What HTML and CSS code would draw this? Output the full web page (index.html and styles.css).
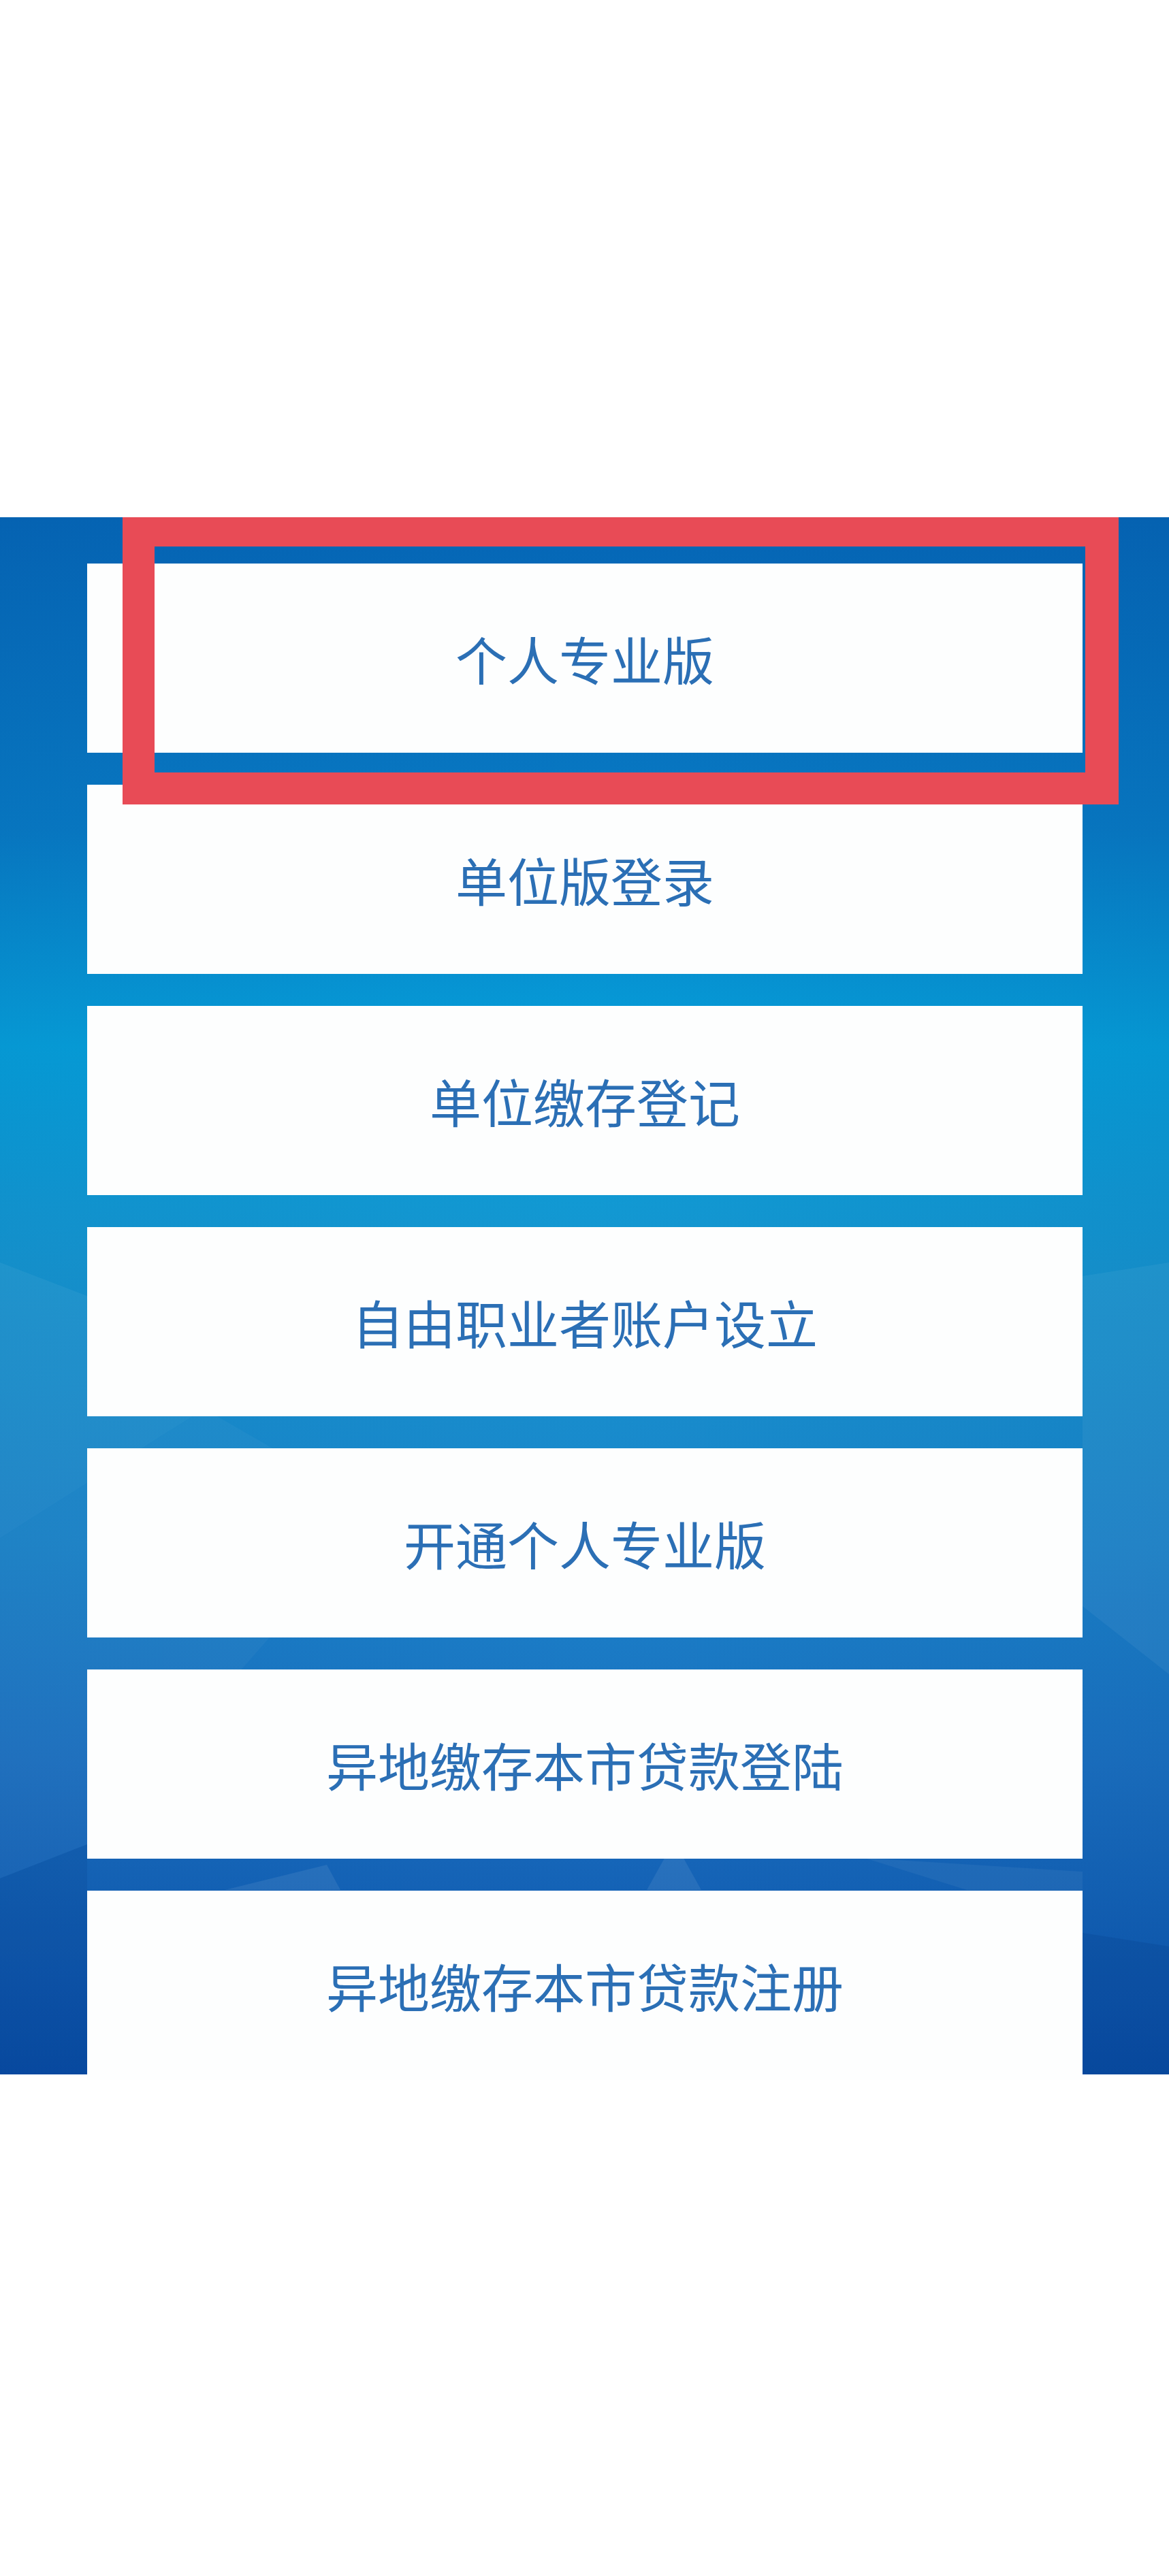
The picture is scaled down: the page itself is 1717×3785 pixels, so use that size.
FILE: index.html
```html
<!DOCTYPE html>
<html lang="zh-CN">
<head>
<meta charset="utf-8">
<title>登录方式</title>
<link rel="stylesheet" href="styles.css">
</head>
<body>
<div class="top-space"></div>
<section class="panel">
  <svg class="panel-bg" viewBox="0 0 1717 2288" preserveAspectRatio="none" aria-hidden="true">
    <defs>
      <linearGradient id="bgv" x1="0" y1="0" x2="0" y2="1">
        <stop offset="0" stop-color="#0566b6"/>
        <stop offset="0.2" stop-color="#087ac4"/>
        <stop offset="0.34" stop-color="#06a0da"/>
        <stop offset="0.48" stop-color="#1696d0"/>
        <stop offset="0.66" stop-color="#1a84ca"/>
        <stop offset="0.8" stop-color="#1b70c0"/>
        <stop offset="1" stop-color="#0a4fa8"/>
      </linearGradient>
      <linearGradient id="bgh" x1="0" y1="0" x2="1" y2="0">
        <stop offset="0" stop-color="#003a80" stop-opacity="0.08"/>
        <stop offset="0.5" stop-color="#003a80" stop-opacity="0"/>
        <stop offset="1" stop-color="#003a80" stop-opacity="0.10"/>
      </linearGradient>
    </defs>
    <rect x="0" y="0" width="1717" height="2288" fill="url(#bgv)"/>
    <rect x="0" y="0" width="1717" height="2288" fill="url(#bgh)"/>
    <polygon points="0,1095 260,1195 300,1310 0,1500" fill="#ffffff" fill-opacity="0.05"/>
    <polygon points="0,1500 300,1310 560,1460 128,1950 0,2000" fill="#ffffff" fill-opacity="0.03"/>
    <polygon points="0,2000 128,1950 128,2288 0,2288" fill="#002a70" fill-opacity="0.12"/>
    <polygon points="1590,1115 1717,1095 1717,1700 1590,1600" fill="#ffffff" fill-opacity="0.05"/>
    <polygon points="1590,2080 1717,2100 1717,2288 1590,2288" fill="#002a70" fill-opacity="0.14"/>
    <polygon points="330,2017 480,1980 500,2017" fill="#ffffff" fill-opacity="0.08"/>
    <polygon points="950,2017 990,1945 1030,2017" fill="#ffffff" fill-opacity="0.08"/>
    <polygon points="1270,1970 1420,2017 1590,2017 1590,1990" fill="#ffffff" fill-opacity="0.05"/>
  </svg>
  <ul class="menu">
    <li class="menu-item">个人专业版</li>
    <li class="menu-item">单位版登录</li>
    <li class="menu-item">单位缴存登记</li>
    <li class="menu-item">自由职业者账户设立</li>
    <li class="menu-item">开通个人专业版</li>
    <li class="menu-item">异地缴存本市贷款登陆</li>
    <li class="menu-item">异地缴存本市贷款注册</li>
  </ul>
  <div class="highlight" aria-hidden="true"></div>
</section>
<div class="bottom-space"></div>
</body>
</html>
```
FILE: styles.css
```css
html, body {
  margin: 0;
  padding: 0;
  background: #ffffff;
}

body {
  font-family: "Noto Sans CJK SC", "Noto Sans", sans-serif;
}

.top-space {
  height: 760px;
}

.panel {
  position: relative;
  height: 2288px;
}

.panel-bg {
  position: absolute;
  left: 0;
  top: 0;
  width: 100%;
  height: 100%;
  display: block;
  z-index: 0;
}

.menu {
  position: relative;
  z-index: 1;
  list-style: none;
  margin: 0;
  padding: 68px 127px 0 128px;
  display: flex;
  flex-direction: column;
  gap: 47px;
}

.menu-item {
  height: 278px;
  background: #fdfefe;
  display: flex;
  align-items: center;
  justify-content: center;
  font-size: 76px;
  line-height: 1;
  color: #2b6fb5;
  font-weight: 400;
}

.highlight {
  position: absolute;
  z-index: 2;
  left: 180px;
  top: 0;
  width: 1463px;
  height: 422px;
  box-sizing: border-box;
  border-style: solid;
  border-color: #e84b56;
  border-width: 43px 49px 47px 47px;
}

.bottom-space {
  height: 737px;
}
```
